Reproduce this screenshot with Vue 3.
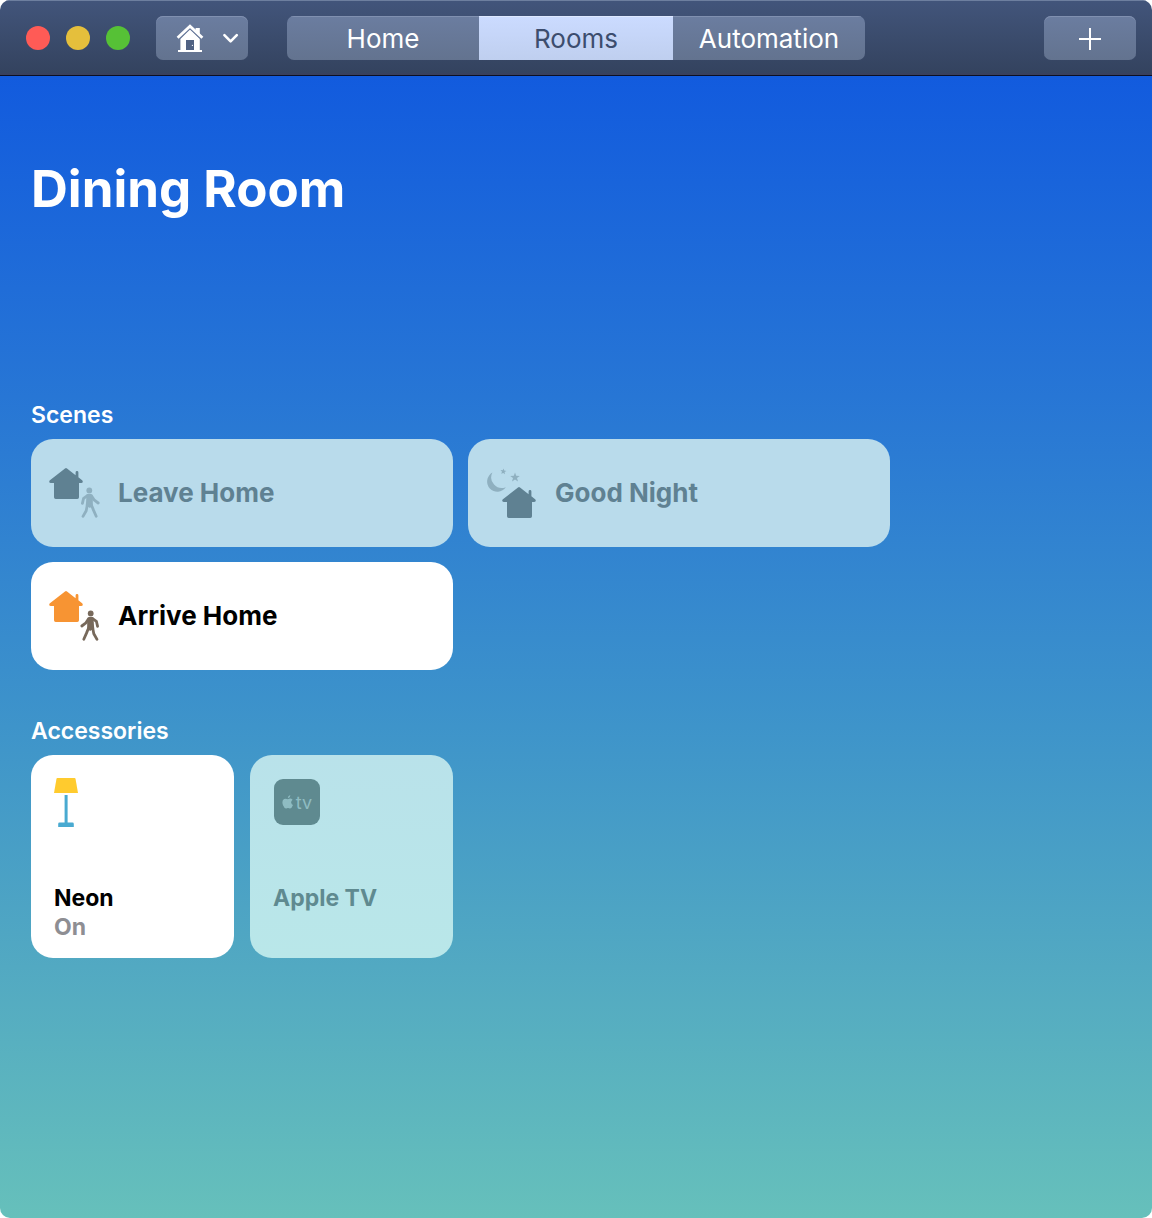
<script setup>
import { ref } from 'vue'

const tabs = ['Home', 'Rooms', 'Automation']
const activeTab = ref('Rooms')

const scenes = ref([
  { name: 'Leave Home', icon: 'leave', on: false },
  { name: 'Good Night', icon: 'night', on: false },
  { name: 'Arrive Home', icon: 'arrive', on: true },
])

const accessories = ref([
  { name: 'Neon', icon: 'lamp', on: true },
  { name: 'Apple TV', icon: 'tv', on: false },
])

const housePath =
  'M17 2.4Q18 1.6 19 2.4L27.6 9.2V6.4Q27.6 5 29 5T30.4 6.4V11.3L34.4 14.6Q35.6 16.8 33.2 17H31V31.3Q31 33 29.3 33H7.7Q6 33 6 31.3V17H2.8Q.4 16.8 1.6 14.6Z'
</script>

<template>
  <div class="window">
    <header class="toolbar">
      <div class="lights">
        <button class="light close" aria-label="Close"></button>
        <button class="light minimize" aria-label="Minimize"></button>
        <button class="light zoom" aria-label="Zoom"></button>
      </div>

      <button class="tool home-menu" aria-label="Choose home">
        <svg width="28" height="28" viewBox="0 0 28 28" aria-hidden="true">
          <path d="M19.6 4H23.8V13L19.6 9Z" fill="#fff" />
          <path d="M14 5.6L23.8 15V26H26V28H2V26H4.4V15Z" fill="#fff" />
          <path d="M2 15.6L14 4.4L26 15.6" fill="none" stroke="#6a7b9c" stroke-width="1.4" />
          <path d="M1.6 13.8L14 2.2L26.4 13.8" fill="none" stroke="#fff" stroke-width="2.8" />
          <path d="M10 16H18V26H10Z" fill="#506283" />
          <circle cx="16.4" cy="21.4" r=".6" fill="#fff" />
        </svg>
        <svg width="18" height="12" viewBox="0 0 18 12" aria-hidden="true">
          <path d="M2.4 3.2L8.6 9.4L14.8 3.2" fill="none" stroke="#fff" stroke-width="2.6" stroke-linecap="round" stroke-linejoin="round" />
        </svg>
      </button>

      <nav class="tabs" aria-label="Sections">
        <button
          v-for="tab in tabs"
          :key="tab"
          class="tab"
          :class="{ active: tab === activeTab }"
          @click="activeTab = tab"
        >{{ tab }}</button>
      </nav>

      <button class="tool add" aria-label="Add">
        <svg width="22" height="24" viewBox="0 0 22 24" aria-hidden="true">
          <path d="M11 2V24M0 13H22" stroke="#fff" stroke-width="2" />
        </svg>
      </button>
    </header>

    <main class="room">
      <h1>Dining Room</h1>

      <section>
        <h2>Scenes</h2>
        <div class="scenes">
          <button
            v-for="scene in scenes"
            :key="scene.name"
            class="card scene"
            :class="{ on: scene.on }"
            :aria-pressed="scene.on"
            @click="scene.on = !scene.on"
          >
            <svg width="54" height="54" viewBox="0 0 54 54" aria-hidden="true">
              <template v-if="scene.icon === 'night'">
                <path class="house" :d="housePath" transform="translate(16 19)" />
                <path class="detail" d="M7.4 6.6A10.2 10.2 0 1 0 20.8 21.2A10.6 10.6 0 0 1 7.4 6.6Z" />
                <path class="detail" d="M30 6.4L31.2 9.8L34.8 9.9L32 12.1L33 15.5L30 13.5L27 15.5L28 12.1L25.2 9.9L28.8 9.8Z" />
                <path class="detail" d="M18.6 2.6L19.2 4.6L21.4 4.9L19.6 6.1L20 8.3L18.3 6.9L16.2 7.7L17 5.7L15.5 4.1L17.7 4.3Z" />
              </template>
              <template v-else>
                <path class="house" :d="housePath" />
                <g :transform="scene.icon === 'arrive' ? 'translate(83 0) scale(-1 1)' : 'translate(1 0)'">
                  <circle class="detail" cx="40.3" cy="24.4" r="2.9" />
                  <path class="detail" d="M37.6 28.4Q40.4 27.2 43.2 28.6L43.8 32V39L41 42L36.8 39.5Z" />
                  <path class="limb" d="M38.4 29.6L34.6 32.3L33.4 37.4M42.6 30L45.4 34.2L49.2 37M38.4 38.5L37.2 44.8L34 50.4M42.2 38.5L44.6 44.4L47.2 50.2" />
                </g>
              </template>
            </svg>
            <span class="scene-name">{{ scene.name }}</span>
          </button>
        </div>
      </section>

      <section>
        <h2>Accessories</h2>
        <div class="accessories">
          <button
            v-for="item in accessories"
            :key="item.name"
            class="card accessory"
            :class="{ on: item.on }"
            :aria-pressed="item.on"
            @click="item.on = !item.on"
          >
            <span class="glyph">
              <svg v-if="item.icon === 'lamp'" width="24" height="50" viewBox="0 0 24 50" aria-hidden="true">
                <path d="M3.4 0H20.6Q21.3 0 21.5 .8L24 15H0L2.5 .8Q2.7 0 3.4 0Z" fill="#ffcb2e" />
                <path d="M10.6 17H13.6V44.6H18.5Q19.8 44.6 19.8 46V49H4.2V46Q4.2 44.6 5.5 44.6H10.6Z" fill="#49aad1" />
              </svg>
              <span v-else class="tv">
                <svg width="12" height="14" viewBox="0 0 12 14" aria-hidden="true">
                  <path d="M8.3 0Q8.5 2.7 5.8 3.3Q5.7 .9 8.3 0ZM6 4.2Q8.7 2.7 10.6 4.7Q8.9 5.9 9.2 7.8Q9.5 9.4 11 10.1Q9.4 14.3 7.2 13.3Q6 12.8 4.8 13.3Q2.6 14.2 1 10.3Q-.6 5.8 2.1 4.1Q3.4 3.4 6 4.2Z" fill="currentColor" />
                </svg>
                <span>tv</span>
              </span>
            </span>
            <span class="name">{{ item.name }}</span>
            <span v-if="item.on" class="status">On</span>
          </button>
        </div>
      </section>
    </main>
  </div>
</template>

<style>
body {
  margin: 0;
  background: #fff;
}
</style>

<style scoped>
.window {
  display: flex;
  flex-direction: column;
  min-height: 100vh;
  border-radius: 10px;
  overflow: hidden;
  font-family: Inter, "Liberation Sans", sans-serif;
}

button {
  margin: 0;
  padding: 0;
  border: 0;
  font: inherit;
  color: inherit;
}

svg {
  display: block;
  flex: none;
}

.toolbar {
  display: flex;
  align-items: center;
  box-sizing: border-box;
  height: 76px;
  padding: 0 16px 0 26px;
  border-bottom: 1px solid #0c1024;
  background: linear-gradient(#42557b, #34435f 96%, #3b3f5c);
  box-shadow: inset 0 1px #6d7f9f;
}

.lights {
  display: flex;
  gap: 16px;
  margin-right: 26px;
}

.light {
  width: 24px;
  height: 24px;
  border-radius: 50%;
}

.close {
  background: #ff5b56;
}

.minimize {
  background: #e5bf3c;
}

.zoom {
  background: #56c136;
}

.tool,
.tab {
  height: 44px;
  background: linear-gradient(#6b7da0, #63738f);
  box-shadow: inset 0 1px #8090b0;
  color: #fff;
}

.tool {
  display: flex;
  align-items: center;
  justify-content: center;
  width: 92px;
  border-radius: 7px;
}

.home-menu {
  gap: 18px;
  padding-left: 12px;
  margin-right: 39px;
}

.tabs {
  display: flex;
  border-radius: 7px;
  overflow: hidden;
}

.tab {
  width: 192px;
  padding-top: 2px;
  font-size: 26px;
  line-height: 42px;
}

.tab.active {
  width: 194px;
  background: linear-gradient(#cbdbff, #bfcfef);
  box-shadow: inset 0 1px #dde8ff;
  color: #3c4d6e;
}

.add {
  margin-left: auto;
}

.room {
  flex: 1;
  padding: 80px 31px;
  background: linear-gradient(#125bde, #2776d5 28%, #3e94ca 57%, #52a9c2 78%, #66c0bb);
  color: #fff;
}

h1 {
  margin: 0 0 178px;
  font-size: 51px;
  font-weight: 700;
  line-height: 66px;
}

h2 {
  margin: 0 0 9px;
  font-size: 23px;
  font-weight: 600;
  line-height: 30px;
}

section + section {
  margin-top: 46px;
}

.scenes {
  display: grid;
  grid-template-columns: repeat(auto-fill, 422px);
  gap: 15px;
}

.accessories {
  display: flex;
  flex-wrap: wrap;
  gap: 16px;
}

.card {
  display: flex;
  box-sizing: border-box;
  border-radius: 22px;
  text-align: left;
  font-weight: 700;
}

.scene {
  align-items: center;
  gap: 16px;
  height: 108px;
  padding: 0 17px;
  background: #b9dbeb;
  color: #5f8192;
  font-size: 26px;
}

.scene-name {
  padding-bottom: 2px;
}

.scene.on,
.accessory.on {
  background: #fff;
  color: #000;
}

.house {
  fill: #5f8192;
}

.detail {
  fill: #8fb0c0;
}

.limb {
  fill: none;
  stroke: #8fb0c0;
  stroke-width: 2.8;
  stroke-linecap: round;
  stroke-linejoin: round;
}

.on .house {
  fill: #f79433;
}

.on .detail {
  fill: #77695b;
}

.on .limb {
  stroke: #77695b;
}

.accessory {
  flex-direction: column;
  width: 203px;
  height: 203px;
  padding: 23px;
  background: linear-gradient(#b9e2ea, #b9e7e9);
  color: #5f8a90;
  font-size: 23px;
  line-height: 29px;
}

.glyph {
  flex: none;
  height: 106px;
}

.tv {
  display: flex;
  align-items: center;
  justify-content: center;
  gap: 2px;
  width: 46px;
  height: 46px;
  margin: 1px;
  border-radius: 9px;
  background: #5f8a90;
  color: #8fbcc2;
  font-size: 18px;
  font-weight: 400;
}

.status {
  color: #8e8e93;
}
</style>
